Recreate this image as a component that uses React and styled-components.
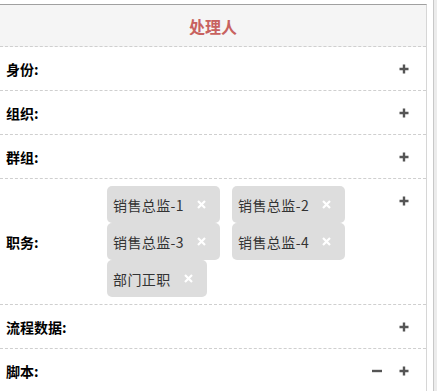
import React from "react";
import styled, { createGlobalStyle } from "styled-components";

const GlobalStyle = createGlobalStyle`
  html, body {
    margin: 0;
    padding: 0;
    background: #fff;
    font-family: "Noto Sans CJK SC", "Noto Sans", sans-serif;
  }
`;

const roles = ["销售总监-1", "销售总监-2", "销售总监-3", "销售总监-4", "部门正职"];

const rows = [
  { label: "身份:" },
  { label: "组织:" },
  { label: "群组:" },
  { label: "职务:", tags: roles },
  { label: "流程数据:" },
  { label: "脚本:", minus: true },
];

const Page = styled.div`
  display: flex;
  padding-top: 4px;
  height: 387px;
`;

const Panel = styled.div`
  width: 426px;
  border-top: 1px solid #a0a0a0;
  border-right: 1px solid #d6d6d6;
`;

const ScrollStrip = styled.div`
  margin-left: 6px;
  width: 3px;
  margin-top: -4px;
  background: #ececec;
  border-left: 1px solid #c8c8c8;
`;

const Header = styled.div`
  height: 41px;
  display: flex;
  align-items: center;
  justify-content: center;
  background: #f5f5f5;
  border-bottom: 1px dashed #cfcfcf;
  color: #c8625f;
  font-size: 16px;
  font-weight: bold;
`;

const Row = styled.div`
  display: flex;
  align-items: center;
  min-height: 28.7px;
  padding: 7px 17px 7px 6px;
  border-bottom: 1px dashed #cfcfcf;
`;

const Label = styled.div`
  width: 101px;
  flex-shrink: 0;
  font-size: 14px;
  font-weight: bold;
  color: #000;
`;

const Content = styled.div`
  flex: 1;
  display: flex;
  flex-wrap: wrap;
  column-gap: 12px;
  max-width: 260px;
`;

const Tag = styled.div`
  display: flex;
  align-items: center;
  height: 37px;
  padding: 0 14px 0 6px;
  background: #dddddd;
  border-radius: 5px;
  font-size: 14px;
  color: #333;
  letter-spacing: 0.4px;
`;

const Close = styled.svg`
  margin-left: 13px;
  width: 9px;
  height: 9px;
`;

const Actions = styled.div`
  margin-left: auto;
  align-self: flex-start;
  height: 29px;
  display: flex;
  align-items: center;
  gap: 17px;
`;

const Icon = styled.svg`
  width: 10px;
  height: 10px;
  display: block;
`;

const Plus = () => (
  <Icon viewBox="0 0 10 10">
    <path d="M5 0.5V9.5M0.5 5H9.5" stroke="#555" strokeWidth="2.4" />
  </Icon>
);

const Minus = () => (
  <Icon viewBox="0 0 10 10">
    <path d="M0 5H10" stroke="#555" strokeWidth="2.4" />
  </Icon>
);

const App = () => (
  <>
    <GlobalStyle />
    <Page>
      <Panel>
        <Header>处理人</Header>
        {rows.map((r) => (
          <Row key={r.label}>
            <Label>{r.label}</Label>
            {r.tags && (
              <Content>
                {r.tags.map((t) => (
                  <Tag key={t}>
                    {t}
                    <Close viewBox="0 0 9 9">
                      <path d="M1 1L8 8M8 1L1 8" stroke="#fff" strokeWidth="2.2" />
                    </Close>
                  </Tag>
                ))}
              </Content>
            )}
            <Actions>
              {r.minus && <Minus />}
              <Plus />
            </Actions>
          </Row>
        ))}
      </Panel>
      <ScrollStrip />
    </Page>
  </>
);

export default App;
